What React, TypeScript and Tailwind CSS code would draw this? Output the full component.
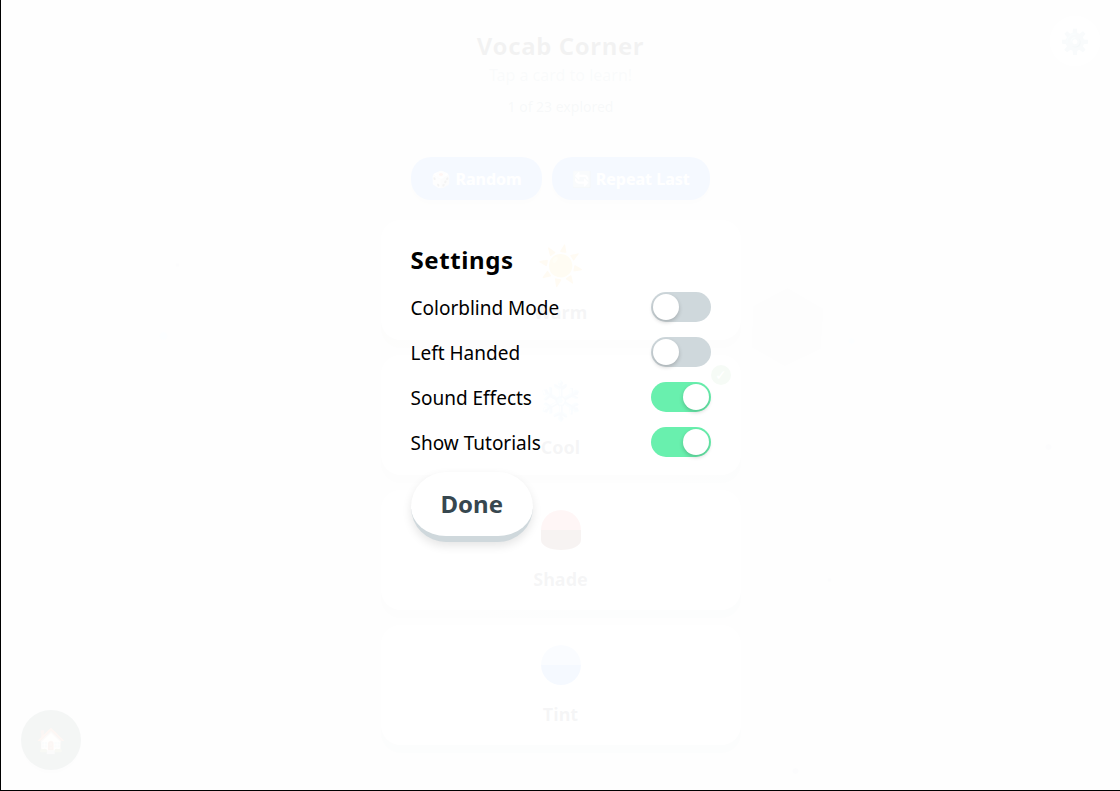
import React, { useState } from 'react';

interface VocabCard {
    label: string;
    icon: React.ReactNode;
    explored?: boolean;
}

const ShadeIcon = () => (
    <svg viewBox="0 0 40 40" className="w-10 h-10 mb-[17px]" aria-hidden="true">
        <path d="M0 20A20 20 0 0 1 40 20Z" fill="#ff5252" />
        <path d="M0 20H40V30C40 36 31 40 20 40C9 40 0 36 0 30Z" fill="#6d1b10" />
    </svg>
);

const TintIcon = () => (
    <svg viewBox="0 0 40 40" className="w-10 h-10 mb-[17px]" aria-hidden="true">
        <path d="M0 20A20 20 0 0 1 40 20Z" fill="#a0c4ff" />
        <path d="M0 20A20 20 0 0 0 40 20Z" fill="#448aff" />
    </svg>
);

const EmojiIcon: React.FC<{ children: string }> = ({ children }) => (
    <span className="flex items-center h-12 mb-3 text-[38px] leading-none">{children}</span>
);

const cards: VocabCard[] = [
    { label: 'Warm', icon: <EmojiIcon>☀️</EmojiIcon> },
    { label: 'Cool', icon: <EmojiIcon>❄️</EmojiIcon>, explored: true },
    { label: 'Shade', icon: <ShadeIcon /> },
    { label: 'Tint', icon: <TintIcon /> },
];

const Backdrop = () => (
    <svg viewBox="0 0 1120 790" preserveAspectRatio="xMidYMid slice" className="absolute inset-0 w-full h-full" aria-hidden="true">
        <polygon points="787,288 823,309 820,349 784,366 751,347 753,306" fill="#d0d0d4" />
        <g fill="#c8c8cc">
            <circle cx="177" cy="265" r="2" />
            <circle cx="163" cy="336" r="4" fill="#c8dcf0" />
            <circle cx="851" cy="341" r="3" fill="#c8dcf0" />
            <circle cx="1048" cy="447" r="3" />
            <circle cx="829" cy="580" r="2" />
            <circle cx="795" cy="771" r="3" />
        </g>
    </svg>
);

interface ToggleRowProps {
    id: string;
    label: string;
    checked: boolean;
    onChange: (value: boolean) => void;
}

const ToggleRow: React.FC<ToggleRowProps> = ({ id, label, checked, onChange }) => (
    <div className="flex items-center justify-between">
        <label htmlFor={id} className="pt-0.5 text-[19px] leading-7">{label}</label>
        <input
            id={id}
            type="checkbox"
            checked={checked}
            onChange={(e) => onChange(e.target.checked)}
            className="appearance-none flex items-center w-[60px] h-[30px] p-0.5 rounded-full bg-[#cfd8dc] checked:bg-[#69f0ae] checked:justify-end cursor-pointer before:content-[''] before:w-[26px] before:h-[26px] before:rounded-full before:bg-white before:shadow-[0_2px_4px_rgba(0,0,0,0.2)]"
        />
    </div>
);

const App: React.FC = () => {
    const [open, setOpen] = useState(true);
    const [settings, setSettings] = useState({
        colorblind: false,
        leftHanded: false,
        sound: true,
        tutorials: true,
    });

    const update = (key: keyof typeof settings) => (value: boolean) =>
        setSettings((prev) => ({ ...prev, [key]: value }));

    return (
        <div className="relative min-h-screen border-l border-b border-black overflow-hidden bg-linear-to-br from-[#e8e8dc] via-[#e8e8e8] to-[#dee8ea] font-['Noto_Sans',sans-serif] text-black">
            <Backdrop />

            <main className="relative flex flex-col items-center px-5 pt-[30px] pb-10">
                <h1 className="text-2xl leading-8 font-bold tracking-wide text-[#111111]">Vocab Corner</h1>
                <p className="text-base leading-[26px] text-[#90a4ae]">Tap a card to learn!</p>
                <p className="mt-2 text-[14px] leading-[22px] text-[#607d8b]">1 of 23 explored</p>

                <div className="flex gap-2.5 mt-[39px]">
                    <button className="h-[43px] px-5 rounded-[20px] bg-[#448aff] text-white text-base font-bold shadow-[0_4px_4px_rgba(0,0,0,0.1)]">🎲 Random</button>
                    <button className="h-[43px] px-5 rounded-[20px] bg-[#448aff] text-white text-base font-bold shadow-[0_4px_4px_rgba(0,0,0,0.1)]">🔄 Repeat Last</button>
                </div>

                <div className="flex flex-col gap-[15px] w-full max-w-[360px] mt-5">
                    {cards.map((card) => (
                        <button
                            key={card.label}
                            className="relative flex flex-col items-center h-[120px] pt-5 rounded-[20px] bg-white text-[#37474f] shadow-[0_8px_0_rgba(0,0,0,0.12)]"
                        >
                            {card.icon}
                            <span className="text-[18px] leading-6 font-bold">{card.label}</span>
                            {card.explored && (
                                <span className="absolute top-2.5 right-2.5 flex items-center justify-center w-5 h-5 rounded-full bg-[#4caf50] text-white text-sm">✓</span>
                            )}
                        </button>
                    ))}
                </div>
            </main>

            <button
                aria-label="Open settings"
                onClick={() => setOpen(true)}
                className="absolute top-4 right-5 w-[50px] h-[50px] rounded-full bg-white text-2xl leading-none"
            >
                ⚙️
            </button>
            <button
                aria-label="Home"
                className="absolute bottom-5 left-5 w-[60px] h-[60px] rounded-full bg-[#2d5048] text-2xl leading-none shadow-[0_4px_8px_rgba(0,0,0,0.1)]"
            >
                🏠
            </button>

            {open && (
                <div role="dialog" aria-labelledby="settings-title" className="absolute inset-0 flex flex-col items-center justify-center px-5 pb-1 bg-white/95">
                    <div className="flex flex-col gap-[15px] w-full max-w-[300px]">
                        <h2 id="settings-title" className="pb-0.5 text-2xl leading-[31px] font-bold tracking-wide">Settings</h2>
                        <ToggleRow id="colorblind" label="Colorblind Mode" checked={settings.colorblind} onChange={update('colorblind')} />
                        <ToggleRow id="left-handed" label="Left Handed" checked={settings.leftHanded} onChange={update('leftHanded')} />
                        <ToggleRow id="sound" label="Sound Effects" checked={settings.sound} onChange={update('sound')} />
                        <ToggleRow id="tutorials" label="Show Tutorials" checked={settings.tutorials} onChange={update('tutorials')} />
                        <button
                            onClick={() => setOpen(false)}
                            className="self-start h-[70px] px-[30px] rounded-full border-b-[6px] border-[#cfd8dc] bg-white text-2xl font-bold text-[#37474f] shadow-[0_4px_10px_rgba(0,0,0,0.1)]"
                        >
                            Done
                        </button>
                    </div>
                </div>
            )}
        </div>
    );
};

export default App;
